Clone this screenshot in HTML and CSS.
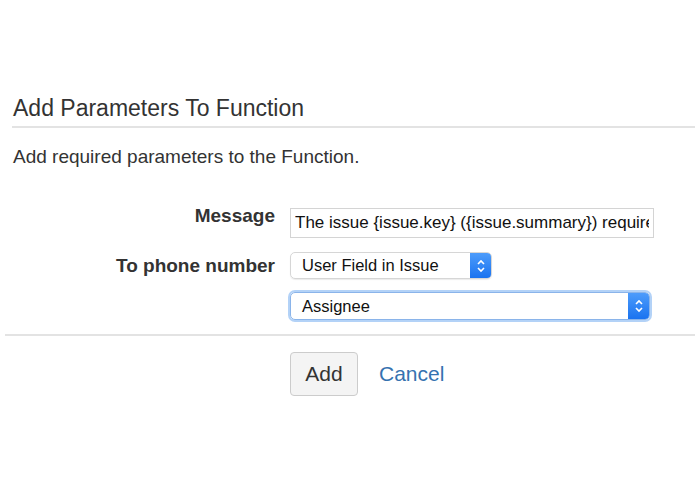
FILE: index.html
```html
<!DOCTYPE html>
<html lang="en">
<head>
    <meta charset="UTF-8">
    <title>Add Parameters To Function</title>
    <link rel="stylesheet" href="styles.css">
</head>
<body>
    <div class="dialog">
        <h2 class="dialog-title">Add Parameters To Function</h2>
        <p class="dialog-desc">Add required parameters to the Function.</p>

        <div class="form">
            <div class="form-row">
                <label class="form-label label-top" for="message">Message</label>
                <input class="text-input" id="message" type="text" value="The issue {issue.key} ({issue.summary}) requires attention">
            </div>
            <div class="form-row">
                <label class="form-label">To phone number</label>
                <div class="select select-short">
                    <span>User Field in Issue</span>
                    <span class="select-arrows">
                        <svg width="10" height="16" viewBox="0 0 10 16"><path d="M2 6 L5 3 L8 6 M2 10 L5 13 L8 10" fill="none" stroke="#fff" stroke-width="1.6"/></svg>
                    </span>
                </div>
            </div>
            <div class="form-row">
                <span class="form-label"></span>
                <div class="select select-long focused">
                    <span>Assignee</span>
                    <span class="select-arrows">
                        <svg width="10" height="16" viewBox="0 0 10 16"><path d="M2 6 L5 3 L8 6 M2 10 L5 13 L8 10" fill="none" stroke="#fff" stroke-width="1.6"/></svg>
                    </span>
                </div>
            </div>
        </div>

        <div class="buttons">
            <button class="btn">Add</button>
            <a class="cancel" href="#">Cancel</a>
        </div>
    </div>
</body>
</html>
```

FILE: styles.css
```css
* {
    margin: 0;
    padding: 0;
    box-sizing: border-box;
}

body {
    font-family: "Liberation Sans", Arial, sans-serif;
    color: #333;
    background: #fff;
    padding-top: 95px;
}

.dialog-title {
    font-size: 23px;
    font-weight: normal;
    color: #333;
    margin-left: 12px;
    padding-left: 1px;
    padding-bottom: 4px;
    border-bottom: 2px solid #e3e3e3;
}

.dialog-desc {
    font-size: 19px;
    margin: 18px 0 0 13px;
}

.form {
    margin-top: 40px;
    display: flex;
    flex-direction: column;
    gap: 14px;
}

.form-row {
    display: flex;
    align-items: center;
}

.form-label {
    width: 290px;
    text-align: right;
    font-weight: bold;
    font-size: 19px;
    color: #333;
    padding-right: 15px;
}

.label-top {
    align-self: flex-start;
    margin-top: -3px;
}

.text-input {
    width: 364px;
    height: 30px;
    border: 1px solid #d4d4d4;
    padding: 0 4px;
    font-family: "Liberation Sans", Arial, sans-serif;
    font-size: 17px;
    color: #111;
    outline: none;
}

.select {
    height: 27px;
    border: 1px solid #d6d6d6;
    border-radius: 5px;
    display: flex;
    align-items: center;
    justify-content: space-between;
    font-size: 16.5px;
    color: #111;
    padding-left: 11px;
    overflow: hidden;
    box-shadow: 0 1px 1px rgba(0,0,0,0.08);
}

.select-short {
    width: 202px;
}

.select-long {
    width: 360px;
    height: 28px;
    margin-top: -1px;
}

.select.focused {
    border-color: #8ab4ea;
    box-shadow: 0 0 0 2px #b3d2f7;
}

.select-arrows {
    width: 21px;
    height: 100%;
    background: linear-gradient(#4d9cfb, #1a73f0);
    display: flex;
    align-items: center;
    justify-content: center;
}

.buttons {
    margin-top: 14px;
    border-top: 2px solid #e3e3e3;
    margin-left: 5px;
    padding: 16px 0 0 285px;
    display: flex;
    align-items: center;
    gap: 21px;
}

.btn {
    font-family: "Liberation Sans", Arial, sans-serif;
    font-size: 21px;
    color: #333;
    background: #f4f4f4;
    border: 1px solid #ccc;
    border-radius: 4px;
    width: 68px;
    height: 44px;
}

.cancel {
    font-size: 21px;
    color: #3572b0;
    text-decoration: none;
}
```
